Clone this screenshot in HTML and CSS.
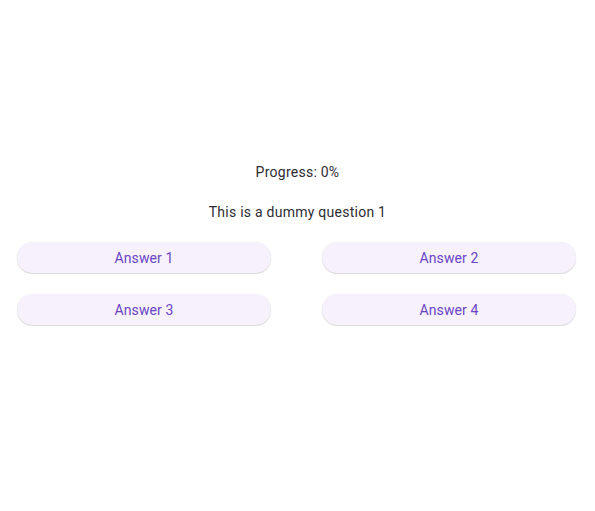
FILE: index.html
```html
<!DOCTYPE html>
<html>
<head>
<meta charset="utf-8">
<link rel="stylesheet" href="styles.css">
</head>
<body>
<main class="quiz">
  <p class="progress">Progress: 0%</p>
  <p class="question">This is a dummy question 1</p>
  <div class="answers">
    <button class="answer">Answer 1</button>
    <button class="answer">Answer 2</button>
    <button class="answer">Answer 3</button>
    <button class="answer">Answer 4</button>
  </div>
</main>
</body>
</html>
```

FILE: styles.css
```css
html, body {
  margin: 0;
  padding: 0;
  background: #ffffff;
}
body {
  font-family: Roboto, "Liberation Sans", sans-serif;
  color: #2e2c33;
  width: 595px;
  height: 511px;
}
.quiz {
  padding-top: 162px;
  display: flex;
  flex-direction: column;
}
.progress, .question {
  margin: 0;
  font-size: 14px;
  line-height: 20px;
  text-align: center;
  letter-spacing: 0.25px;
}
.question {
  margin-top: 20px;
}
.answers {
  margin-top: 20px;
  padding-left: 17px;
  display: grid;
  grid-template-columns: 254px 254px;
  column-gap: 51px;
  row-gap: 20px;
}
.answer {
  height: 31px;
  margin-bottom: 1px;
  border: none;
  border-radius: 16px;
  background: #f6f1fb;
  color: #6a45c4;
  font-family: Roboto, "Liberation Sans", sans-serif;
  font-size: 14px;
  font-weight: 400;
  letter-spacing: 0.1px;
  padding: 0 12px;
  box-shadow: 0 1px 1px rgba(0,0,0,0.14), 0 0 1px rgba(0,0,0,0.08);
  cursor: pointer;
}
```
